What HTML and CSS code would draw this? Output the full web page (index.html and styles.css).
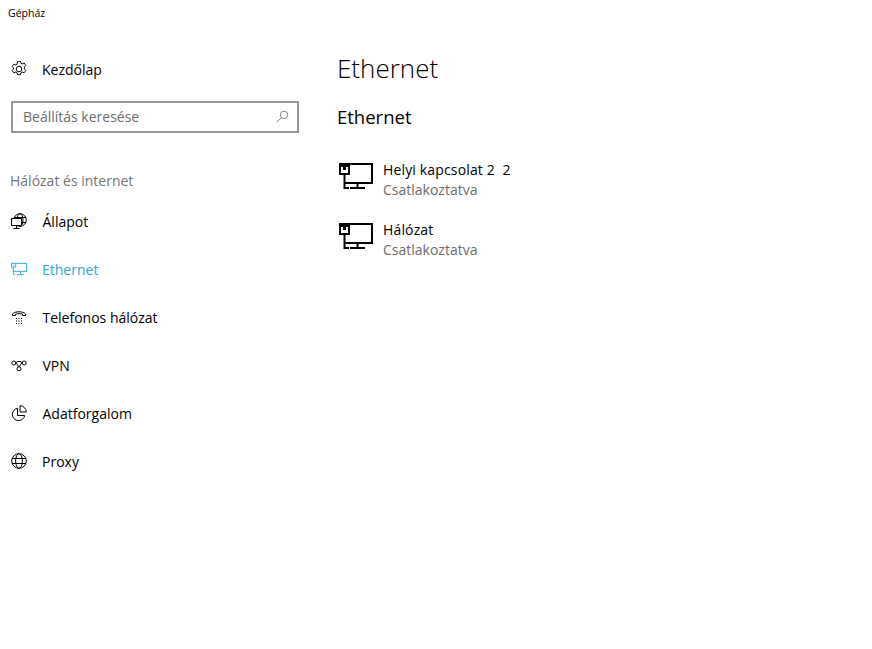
FILE: index.html
```html
<!DOCTYPE html>
<html lang="en">
<head>
  <meta charset="UTF-8" />
  <title>Gépház</title>
  <link rel="stylesheet" href="styles.css">
</head>
<body>
  <div class="titlebar">Gépház</div>
  <div class="content">
    <div class="sidebar">
      <div class="nav-item home tight">
        <svg class="icon" viewBox="0.500 0.500 15 15"><g fill="none" stroke="#000" stroke-width="0.900"><circle cx="8" cy="8" r="2.600"/><path d="M6.600 .7h2.800l.4 1.900 1.200.6 1.800-.8 1.600 2.200-1.300 1.500v1.800l1.300 1.500-1.600 2.200-1.800-.8-1.200.6-.4 1.900H6.600l-.4-1.900-1.200-.6-1.800.8-1.600-2.200 1.300-1.500V7.100L1.600 5.600l1.600-2.200 1.800.8 1.200-.6z"/></g></svg>
        <span>Kezdőlap</span>
      </div>
      <div class="search">
        <span>Beállítás keresése</span>
        <svg class="search-icon" viewBox="0 0 14 14"><g fill="none" stroke="#777"><circle cx="8.700" cy="5.300" r="4"/><path d="M5.800 8.200L1 13"/></g></svg>
      </div>
      <div class="group">Hálózat és internet</div>
      <div class="nav-item">
        <svg class="icon" viewBox="0 0 16 16"><g fill="none" stroke="#000"><circle cx="9" cy="7" r="6.300"/><ellipse cx="9" cy="7" rx="3" ry="6.300"/><path d="M3 4.500h12M4 9.500h11"/><path fill="#fff" d="M.5 5.500h10v7H.5z"/><path d="M5.500 12.500v3M2.500 15.500h6"/></g></svg>
        <span>Állapot</span>
      </div>
      <div class="nav-item active tight">
        <svg class="icon" viewBox="0 0 17 15"><g fill="none" stroke="#2fa9cc"><path d="M5 1.500h11.500v8.500H2.500M2.500 5.500v7.500M10 10v3M6.500 13.500h7M2.500 13.500h2"/><path d="M.5 1.500h4.500v4H.5z"/></g><path fill="#2fa9cc" d="M2 3h1.500v1H2z"/></svg>
        <span>Ethernet</span>
      </div>
      <div class="nav-item">
        <svg class="icon" viewBox="0 0 16 16"><g fill="none" stroke="#000"><path d="M1.500 6.500V5c2.500-3 10.500-3 13 0v1.500h-3V5.200c-2-.7-5-.7-7 0v1.300z"/></g><path fill="#000" d="M5 9h1v1H5zM7.500 9h1v1h-1zM10 9h1v1h-1zM5 11.500h1v1H5zM7.500 11.500h1v1h-1zM10 11.500h1v1h-1zM5 14h1v1H5zM7.500 14h1v1h-1zM10 14h1v1h-1z"/></svg>
        <span>Telefonos hálózat</span>
      </div>
      <div class="nav-item">
        <svg class="icon" viewBox="0 0 16 16"><g fill="none" stroke="#000"><circle cx="2.800" cy="6" r="2"/><circle cx="13.200" cy="6" r="2"/><circle cx="8" cy="11.800" r="2"/><path d="M4.800 6c1.500 0 2.200 3.800 3.200 3.800S9.700 6 11.200 6M4.800 6c.5-2 5.900-2 6.400 0"/></g></svg>
        <span>VPN</span>
      </div>
      <div class="nav-item">
        <svg class="icon" viewBox="0 0 16 16"><g fill="none" stroke="#000"><path d="M6.500 3.300a6.200 6.200 0 1 0 7.200 7.200H6.500z"/><path d="M9 .7a6.500 6.500 0 0 1 6.300 6.300H9z"/></g></svg>
        <span>Adatforgalom</span>
      </div>
      <div class="nav-item tight">
        <svg class="icon" viewBox="0 0 16 16"><g fill="none" stroke="#000"><circle cx="8" cy="8" r="7.300"/><ellipse cx="8" cy="8" rx="3.400" ry="7.300"/><path d="M1 5.500h14M1 10.500h14"/></g></svg>
        <span>Proxy</span>
      </div>
    </div>
    <div class="main">
      <h1>Ethernet</h1>
      <h2>Ethernet</h2>
      <div class="conn">
        <svg class="conn-icon" viewBox="0 0 34 28"><g fill="none" stroke="#000" stroke-width="2"><path d="M10 2h23v19H5.500M5.500 12v15M18.500 21v5M11 26h15M5.500 26H10"/><path d="M1 2h9v10H1z"/></g><path fill="#000" d="M1 2h9v3H1zM4 5h3v3H4z"/></svg>
        <div>
          <div class="conn-name">Helyi kapcsolat 2&nbsp; 2</div>
          <div class="conn-status">Csatlakoztatva</div>
        </div>
      </div>
      <div class="conn">
        <svg class="conn-icon" viewBox="0 0 34 28"><g fill="none" stroke="#000" stroke-width="2"><path d="M10 2h23v19H5.500M5.500 12v15M18.500 21v5M11 26h15M5.500 26H10"/><path d="M1 2h9v10H1z"/></g><path fill="#000" d="M1 2h9v3H1zM4 5h3v3H4z"/></svg>
        <div>
          <div class="conn-name">Hálózat</div>
          <div class="conn-status">Csatlakoztatva</div>
        </div>
      </div>
    </div>
  </div>
</body>
</html>
```

FILE: styles.css
```css
* {
  margin: 0;
  padding: 0;
  box-sizing: border-box;
  font-family: 'Open Sans', 'Noto Sans', sans-serif;
}

html, body {
  height: 100%;
  background: #ffffff;
  overflow: hidden;
}

.titlebar {
  height: 26px;
  padding: 5px 0 0 8px;
  font-size: 10.500px;
  line-height: 16px;
  color: #000;
}

.content {
  display: flex;
}

.sidebar {
  width: 337px;
  flex-shrink: 0;
  padding-top: 20px;
}

.nav-item {
  height: 48px;
  display: flex;
  align-items: center;
  padding-left: 11px;
  font-size: 14px;
  color: #000;
}

.nav-item.home {
  margin-top: -1px;
}

.nav-item span {
  margin-left: 15.500px;
}

.nav-item.tight span {
  margin-left: 15px;
}

.nav-item.active {
  color: #2fa9cc;
}

.icon {
  width: 16px;
  height: 16px;
  flex-shrink: 0;
}

.search {
  width: 288px;
  height: 32px;
  margin: 8px 0 0 11px;
  border: 2px solid #999;
  display: flex;
  align-items: center;
  justify-content: space-between;
  padding: 0 8px 2px 10px;
  font-size: 14px;
  color: #6d6d6d;
}

.search-icon {
  width: 13px;
  height: 13px;
}

.group {
  margin: 38px 0 6px 10px;
  font-size: 14px;
  line-height: 20px;
  color: #767676;
}

.main {
  flex-grow: 1;
  padding-top: 23px;
}

h1 {
  font-size: 26px;
  font-weight: 300;
  line-height: 38px;
  color: #000;
}

h2 {
  font-size: 18.500px;
  font-weight: 400;
  line-height: 26px;
  margin-top: 17px;
  margin-bottom: 30px;
  color: #000;
}

.conn {
  height: 60px;
  display: flex;
  align-items: flex-start;
}

.conn-icon {
  width: 34px;
  height: 28px;
  margin: 2px 10px 0 2px;
  flex-shrink: 0;
}

.conn-name {
  font-size: 14px;
  line-height: 20px;
  letter-spacing: 0.150px;
  color: #000;
}

.conn-status {
  font-size: 14px;
  line-height: 20px;
  color: #6d6d6d;
}
```
